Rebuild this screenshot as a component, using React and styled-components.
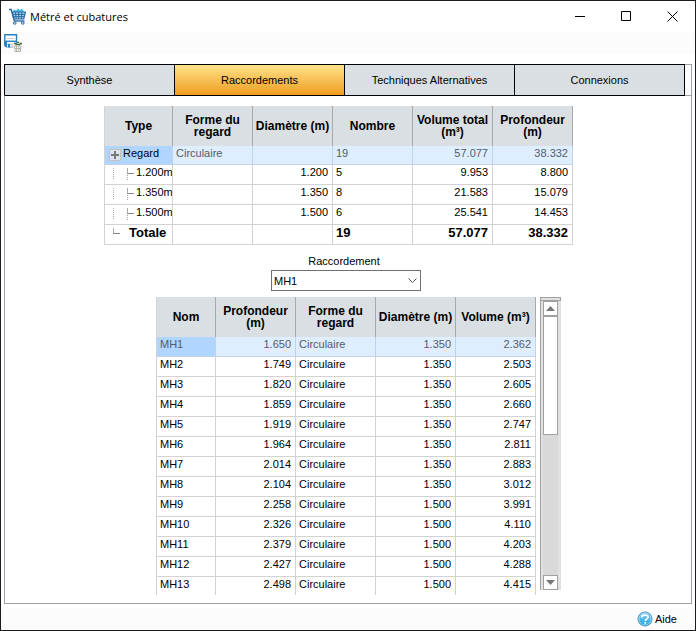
import React, { useRef } from 'react';
import styled, { createGlobalStyle, css } from 'styled-components';

const GlobalStyle = createGlobalStyle`
  *, *::before, *::after {
    box-sizing: border-box;
  }
  body {
    margin: 0;
    background: #fff;
    color: #000;
    font: 11px/14px 'Liberation Sans', Arial, sans-serif;
  }
  button, select {
    font: inherit;
    color: inherit;
  }
`;

const Window = styled.div`
  display: flex;
  flex-direction: column;
  height: 100vh;
  border: 1px solid #1c1a1d;
`;

const TitleBar = styled.header`
  display: flex;
  align-items: center;
  height: 31px;
  padding-left: 8px;
  flex: none;
`;

const Title = styled.h1`
  flex: 1;
  margin: 0 0 0 4px;
  font: 400 11px/16px 'Open Sans', 'Noto Sans', sans-serif;
`;

const CaptionButton = styled.button`
  display: flex;
  align-items: center;
  justify-content: center;
  width: 46px;
  height: 30px;
  padding: 0;
  border: 0;
  background: none;
`;

const Toolbar = styled.div`
  display: flex;
  align-items: center;
  flex: none;
  height: 22px;
  padding-left: 3px;
  background: #fcfcfc;
`;

const IconButton = styled.button`
  display: flex;
  padding: 0;
  border: 0;
  background: none;
`;

const TabControl = styled.div`
  display: flex;
  flex-direction: column;
  flex: 1;
  min-height: 0;
  margin: 10px 3px 4px;
`;

const TabList = styled.div`
  display: flex;
  flex: none;
  height: 32px;
  padding-right: 6px;
  border: solid #9ba3aa;
  border-width: 1px 1px 1px 0;
  margin-bottom: -1px;
`;

const Tab = styled.button`
  flex: 1;
  margin: -1px 0 -1px -1px;
  padding: 0;
  border: 1px solid #000;
  background: ${({ $active }) =>
    $active ? 'linear-gradient(#fde28a, #f19d20)' : '#dadfe3'};

  &:first-child {
    margin-left: 0;
  }
`;

const Panel = styled.main`
  display: flex;
  flex-direction: column;
  align-items: center;
  flex: 1;
  min-height: 0;
  padding: 10px 0 8px;
  border: 1px solid #9ba3aa;
  border-top-color: transparent;
`;

const Summary = styled.section`
  flex: none;
  padding-right: 19px;
`;

const Picker = styled.div`
  display: flex;
  flex-direction: column;
  align-items: center;
  flex: none;
  padding: 9px 4px 6px 0;
`;

const PickerLabel = styled.label`
  padding-right: 4px;
`;

const SelectBox = styled.div`
  display: grid;
  margin-top: 2px;

  > * {
    grid-area: 1 / 1;
  }
  > svg {
    align-self: center;
    justify-self: end;
    margin-right: 4px;
    pointer-events: none;
  }
`;

const Select = styled.select`
  appearance: none;
  width: 150px;
  height: 21px;
  padding: 0 20px 0 2px;
  border: 1px solid #707070;
  border-radius: 0;
  background: #fff;
`;

const Details = styled.section`
  display: flex;
  flex: 1;
  min-height: 0;
  padding-left: 21px;
`;

const Viewport = styled.div`
  overflow: hidden;
`;

const Table = styled.table`
  table-layout: fixed;
  width: ${({ $width }) => $width}px;
  border-spacing: 0;
  border-left: 1px solid #d3d3d3;
`;

const HeadCell = styled.th`
  height: 40px;
  padding: 0;
  border-right: 1px solid #a9a9a9;
  background: #dadfe3;
  font-size: 12px;
  line-height: 12px;
`;

const Cell = styled.td`
  height: ${({ $short }) => ($short ? 19 : 20)}px;
  padding: 0 4px ${({ $short }) => ($short ? 3 : 4)}px 3px;
  overflow: hidden;
  border: solid #d3d3d3;
  border-width: 0 1px 1px 0;
  line-height: 15px;
  text-align: ${({ $right }) => ($right ? 'right' : 'left')};
  white-space: nowrap;
`;

const NameCell = styled(Cell)`
  padding-left: ${({ $tree }) => ($tree ? 0 : 3)}px;
  ${({ $tree }) => $tree && 'padding-right: 0;'}
`;

const Row = styled.tr`
  ${({ $selected }) =>
    $selected &&
    css`
      color: #555b66;

      ${Cell} {
        border-color: #c0d3ea;
        background: #deeeff;
      }
      ${NameCell} {
        background: #b0d6ff;
      }
    `}
  ${({ $total }) =>
    $total &&
    css`
      font-size: 13px;
      font-weight: 700;
    `}
`;

const TreeLabel = styled.span`
  display: flex;
  align-items: center;
  height: 15px;
  color: #000;

  svg {
    flex: none;
  }
`;

const ScrollBar = styled.div`
  display: flex;
  flex-direction: column;
  width: 21px;
  margin: 0 0 5px 4px;
  background: #e1e1e1;
`;

const ScrollCap = styled.div`
  height: 4px;
  border: 1px solid #a0a0a0;
  background: #e1e1e1;
`;

const ScrollBody = styled.div`
  display: flex;
  flex-direction: column;
  flex: 1;
  padding: 0 3px 0 2px;
  border-left: 1px solid #a0a0a0;
`;

const ScrollTrack = styled.div`
  flex: 1;
  background: #d9d9d9;
`;

const ScrollThumb = styled.div`
  height: 46%;
  border: 1px solid #a0a0a0;
  background: #fff;
`;

const ScrollButton = styled.button`
  display: flex;
  align-items: center;
  justify-content: center;
  height: 15px;
  padding: 0;
  border: 1px solid #a0a0a0;
  background: #fff;
`;

const StatusBar = styled.footer`
  display: flex;
  align-items: center;
  justify-content: flex-end;
  flex: none;
  height: 22px;
  padding-right: 18px;
  background: #fcfcfc;
`;

const HelpLink = styled.a`
  display: flex;
  align-items: center;
  gap: 2px;
  color: #000;
  text-decoration: none;
`;

const tabs = ['Synthèse', 'Raccordements', 'Techniques Alternatives', 'Connexions'];

const summaryRows = [
  { type: 'Regard', kind: 'root', shape: 'Circulaire', diameter: '', count: 19, volume: '57.077', depth: '38.332' },
  { type: '1.200m', kind: 'child', shape: '', diameter: '1.200', count: 5, volume: '9.953', depth: '8.800' },
  { type: '1.350m', kind: 'child', shape: '', diameter: '1.350', count: 8, volume: '21.583', depth: '15.079' },
  { type: '1.500m', kind: 'child', shape: '', diameter: '1.500', count: 6, volume: '25.541', depth: '14.453' },
  { type: 'Totale', kind: 'total', shape: '', diameter: '', count: 19, volume: '57.077', depth: '38.332' },
];

const manholes = [
  ['MH1', '1.650', '1.350', '2.362'],
  ['MH2', '1.749', '1.350', '2.503'],
  ['MH3', '1.820', '1.350', '2.605'],
  ['MH4', '1.859', '1.350', '2.660'],
  ['MH5', '1.919', '1.350', '2.747'],
  ['MH6', '1.964', '1.350', '2.811'],
  ['MH7', '2.014', '1.350', '2.883'],
  ['MH8', '2.104', '1.350', '3.012'],
  ['MH9', '2.258', '1.500', '3.991'],
  ['MH10', '2.326', '1.500', '4.110'],
  ['MH11', '2.379', '1.500', '4.203'],
  ['MH12', '2.427', '1.500', '4.288'],
  ['MH13', '2.498', '1.500', '4.415'],
];

const CartIcon = () => (
  <svg width="17" height="17" viewBox="0 0 17 17" fill="none">
    <path d="M4 4l.5-2.500L7 2.500 9 .5l2 1.500 2-1.500L15 4z" fill="#45bce8" />
    <path d="M0 1.500h2.200L5.300 13" stroke="#27699f" strokeWidth="1.400" />
    <path d="M3.200 4h13.300l-1.800 7H5z" fill="#a9d2ee" stroke="#27699f" strokeWidth="1.200" />
    <path d="M4 6.400h12M4.500 8.700h11M6.500 4l.7 7M9.700 4v7M13 4l-.7 7" stroke="#27699f" />
    <path d="M5 13h10.500" stroke="#27699f" strokeWidth="1.400" />
    <circle cx="5.800" cy="15" r="1.300" fill="#e8f4fb" stroke="#27699f" />
    <circle cx="13.800" cy="15" r="1.300" fill="#e8f4fb" stroke="#27699f" />
  </svg>
);

const SaveIcon = () => (
  <svg width="18" height="20" viewBox="0 0 18 20" fill="none">
    <path d="M.8 1.800h11.700v12H2.500L.8 12.500z" fill="#fff" stroke="#2680c2" strokeWidth="1.400" />
    <path d="M3 5.500h7.500" stroke="#c8c8c8" />
    <path d="M1 8.300h11" stroke="#2680c2" strokeWidth="1.400" />
    <path d="M1 8h2v5.500H1z" fill="#2680c2" />
    <path d="M3 10h7.500v4.500H3z" fill="#dcdcdc" />
    <path d="M4 11h2v3.500H4z" fill="#2680c2" />
    <path d="M9.500 10.500H18V20H9.500z" fill="#fcfcfc" />
    <path d="M10 10.500h2.500M13 9.500h2M15.500 10.500H18M11.500 11.700h5" stroke="#3f6a35" strokeWidth="1.300" />
    <path d="M10.500 13h6.500l-.6 5.500h-5.300zM12.500 13v5.500M14.800 13v5.500M10.700 15.500h6" stroke="#b4b4a8" />
  </svg>
);

const HelpIcon = () => (
  <svg width="16" height="16" viewBox="0 0 16 16">
    <defs>
      <linearGradient id="help" x1="0" y1="0" x2="0" y2="1">
        <stop offset="0" stopColor="#8bcdf0" />
        <stop offset="1" stopColor="#1ba4e6" />
      </linearGradient>
    </defs>
    <circle cx="8" cy="8" r="7" fill="url(#help)" stroke="#4a8fb8" />
    <circle cx="8" cy="8" r="6" fill="none" stroke="#b9e4f8" strokeWidth=".7" />
    <path d="M4.700 6.500C4.700 3.300 11.300 3.300 11.100 6.300C11 8.200 8.300 7.800 8.300 10" fill="none" stroke="#fff" strokeWidth="1.700" />
    <path d="M7.400 11h1.800v1.700H7.400z" fill="#fff" />
  </svg>
);

const TreeMark = ({ kind }) => {
  if (kind === 'root') {
    return (
      <svg width="18" height="15" viewBox="0 0 18 15" fill="none">
        <path d="M4.500 3.500h11v11h-11z" fill="#dbe3ec" stroke="#c2c2c2" />
        <path d="M6 9h8M10 5v8" stroke="#777" strokeWidth="2" />
      </svg>
    );
  }
  if (kind === 'total') {
    return (
      <svg width="24" height="15" viewBox="0 0 24 15" fill="none">
        <path d="M8.500 3v6" stroke="#aaa" />
        <path d="M8 8.500h7" stroke="#888" />
      </svg>
    );
  }
  return (
    <svg width="31" height="15" viewBox="0 0 31 15" fill="none">
      <path d="M8.500 3v12M22.500 10v5" stroke="#aaa" strokeDasharray="1 1" />
      <path d="M22.500 3v6" stroke="#aaa" />
      <path d="M22 8.500h7" stroke="#888" />
    </svg>
  );
};

const SummaryTable = () => (
  <Table $width={469}>
    <colgroup>
      <col width="68" />
    </colgroup>
    <thead>
      <tr>
        <HeadCell>Type</HeadCell>
        <HeadCell>Forme du<br />regard</HeadCell>
        <HeadCell>Diamètre (m)</HeadCell>
        <HeadCell>Nombre</HeadCell>
        <HeadCell>Volume total<br />(m³)</HeadCell>
        <HeadCell>Profondeur<br />(m)</HeadCell>
      </tr>
    </thead>
    <tbody>
      {summaryRows.map(row => {
        const root = row.kind === 'root';
        return (
          <Row key={row.type} $selected={root} $total={row.kind === 'total'}>
            <NameCell $tree $short={root}>
              <TreeLabel>
                <TreeMark kind={row.kind} />
                {row.type}
              </TreeLabel>
            </NameCell>
            <Cell $short={root}>{row.shape}</Cell>
            <Cell $short={root} $right>{row.diameter}</Cell>
            <Cell $short={root}>{row.count}</Cell>
            <Cell $short={root} $right>{row.volume}</Cell>
            <Cell $short={root} $right>{row.depth}</Cell>
          </Row>
        );
      })}
    </tbody>
  </Table>
);

const ManholeTable = () => (
  <Table $width={380}>
    <colgroup>
      <col width="59" />
    </colgroup>
    <thead>
      <tr>
        <HeadCell>Nom</HeadCell>
        <HeadCell>Profondeur<br />(m)</HeadCell>
        <HeadCell>Forme du<br />regard</HeadCell>
        <HeadCell>Diamètre (m)</HeadCell>
        <HeadCell>Volume (m³)</HeadCell>
      </tr>
    </thead>
    <tbody>
      {manholes.map(([name, depth, diameter, volume], i) => (
        <Row key={name} $selected={i === 0}>
          <NameCell>{name}</NameCell>
          <Cell $right>{depth}</Cell>
          <Cell>Circulaire</Cell>
          <Cell $right>{diameter}</Cell>
          <Cell $right>{volume}</Cell>
        </Row>
      ))}
    </tbody>
  </Table>
);

const App = () => {
  const viewport = useRef(null);
  const scroll = dy => viewport.current.scrollBy(0, dy);

  return (
    <Window>
      <GlobalStyle />
      <TitleBar>
        <CartIcon />
        <Title>Métré et cubatures</Title>
        <CaptionButton aria-label="Réduire">
          <svg width="11" height="11" stroke="#000"><path d="M0 5.500h10" /></svg>
        </CaptionButton>
        <CaptionButton aria-label="Agrandir">
          <svg width="11" height="11" stroke="#000" fill="none"><path d="M.5.5h9v9h-9z" /></svg>
        </CaptionButton>
        <CaptionButton aria-label="Fermer">
          <svg width="11" height="11" stroke="#000"><path d="M.5.5l10 10M10.500.5l-10 10" /></svg>
        </CaptionButton>
      </TitleBar>
      <Toolbar>
        <IconButton aria-label="Enregistrer">
          <SaveIcon />
        </IconButton>
      </Toolbar>
      <TabControl>
        <TabList role="tablist">
          {tabs.map(tab => (
            <Tab key={tab} role="tab" aria-selected={tab === 'Raccordements'} $active={tab === 'Raccordements'}>
              {tab}
            </Tab>
          ))}
        </TabList>
        <Panel>
          <Summary>
            <SummaryTable />
          </Summary>
          <Picker>
            <PickerLabel htmlFor="raccordement">Raccordement</PickerLabel>
            <SelectBox>
              <Select id="raccordement" defaultValue="MH1">
                {manholes.map(([name]) => (
                  <option key={name}>{name}</option>
                ))}
              </Select>
              <svg width="9" height="6" fill="none" stroke="#555"><path d="M.5.5l4 4 4-4" /></svg>
            </SelectBox>
          </Picker>
          <Details>
            <Viewport ref={viewport}>
              <ManholeTable />
            </Viewport>
            <ScrollBar>
              <ScrollCap />
              <ScrollBody>
                <ScrollButton aria-label="Monter" onClick={() => scroll(-20)}>
                  <svg width="9" height="5" fill="#777"><path d="M0 5l4.500-5L9 5z" /></svg>
                </ScrollButton>
                <ScrollTrack>
                  <ScrollThumb />
                </ScrollTrack>
                <ScrollButton aria-label="Descendre" onClick={() => scroll(20)}>
                  <svg width="9" height="5" fill="#777"><path d="M0 0l4.500 5L9 0z" /></svg>
                </ScrollButton>
              </ScrollBody>
            </ScrollBar>
          </Details>
        </Panel>
      </TabControl>
      <StatusBar>
        <HelpLink href="#aide">
          <HelpIcon />
          Aide
        </HelpLink>
      </StatusBar>
    </Window>
  );
};

export default App;
